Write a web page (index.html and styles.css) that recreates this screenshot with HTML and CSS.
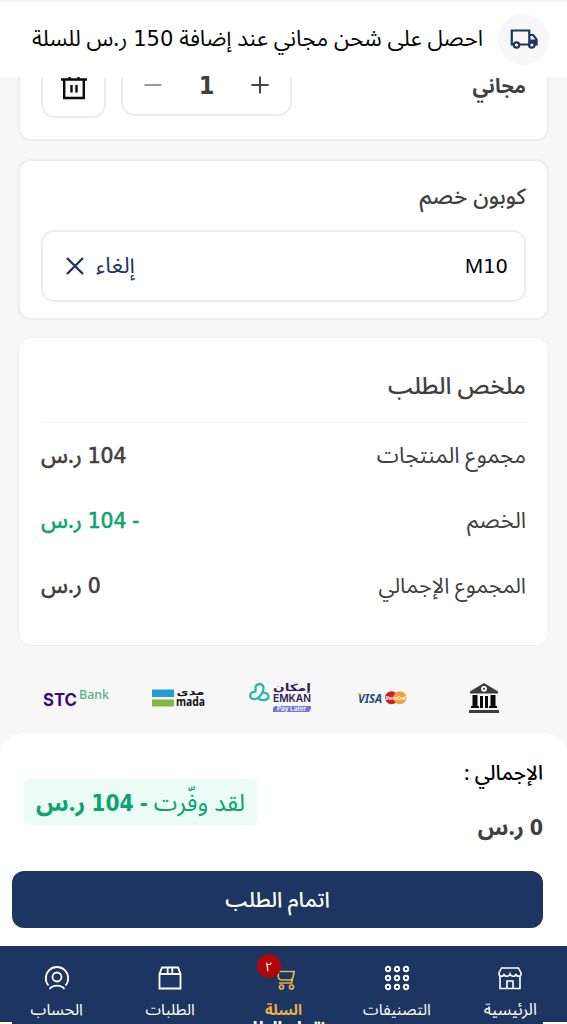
FILE: index.html
```html
<!DOCTYPE html>
<html lang="ar" dir="rtl">
<head>
<meta charset="utf-8">
<title>السلة</title>
<link rel="stylesheet" href="styles.css">
</head>
<body>
<div class="page">
  <header class="shipping">
    <span class="shipping-icon">
      <svg width="30" height="30" viewBox="0 0 30 30" fill="none" stroke="#1c3661" stroke-width="2.200"><path d="M5 19.500H2.800V5.500H20.300V19.500H10M20.300 10H24.200L27.600 14.500V19.500H25.500"/><path d="M21 14.500H27.500V19H25L22.800 17L21 18Z" fill="#1c3661" stroke="none"/><circle cx="7.500" cy="20" r="2.700"/><circle cx="22.800" cy="20" r="2.700"/></svg>
    </span>
    <p class="shipping-text t">احصل على شحن مجاني عند إضافة <span class="d">150</span> ر.س للسلة</p>
  </header>

  <main class="content">
    <section class="card product">
      <strong class="free t">مجاني</strong>
      <div class="quantity">
        <svg width="20" height="20" viewBox="0 0 20 20" stroke="#444" stroke-width="2"><path d="M1.500 10H18.500M10 1.500V18.500"/></svg>
        <span class="count">1</span>
        <svg width="20" height="20" viewBox="0 0 20 20" stroke="#999" stroke-width="2"><path d="M1.500 10H18.500"/></svg>
      </div>
      <div class="trash">
        <svg width="28" height="26" viewBox="0 0 28 26" fill="none" stroke="#0b0b0b" stroke-width="2.400"><path d="M1 5.500H27M4.200 5.500V24H23.800V5.500M9.500 5V1.500H18.500V5M11.500 11V18.500M16.500 11V18.500"/></svg>
      </div>
    </section>

    <section class="card coupon">
      <h2 class="coupon-title t">كوبون خصم</h2>
      <div class="coupon-field">
        <span class="code">M<span class="d">10</span></span>
        <span class="cancel"><span class="cancel-text t">إلغاء</span>
          <svg width="18" height="18" viewBox="0 0 18 18" stroke="#1c3661" stroke-width="2.400"><path d="M1 1L17 17M17 1L1 17"/></svg>
        </span>
      </div>
    </section>

    <section class="card summary">
      <h2 class="summary-title t">ملخص الطلب</h2>
      <div class="row"><span class="t label-a">مجموع المنتجات</span><span class="amount t"><span class="d">104</span> ر.س</span></div>
      <div class="row"><span class="t label-a">الخصم</span><span class="amount green t">- <span class="d">104</span> ر.س</span></div>
      <div class="row"><span class="t label-c">المجموع الإجمالي</span><span class="amount t"><span class="d">0</span> ر.س</span></div>
    </section>

    <div class="payments">
      <div class="pay"><svg width="32" height="32" viewBox="0 0 32 32"><path d="M2 9.500L16 1L30 9.500V11.500H2Z" fill="#3c3c3c"/><circle cx="16" cy="6.800" r="2.900" fill="#fff"/><circle cx="16" cy="6.800" r="1" fill="#333"/><path d="M4.500 13H9.500V24H11V26H3V24H4.500ZM12 14H15V26H12ZM17 14H20V26H17ZM22.500 13H27.500V24H29V26H21V24H22.500Z" fill="#080808"/><path d="M1 28H31V31H1Z" fill="#3c3c3c"/></svg></div>
      <div class="pay"><svg class="ltr" width="50" height="16" viewBox="0 0 50 16"><text x="1" y="12.500" class="visa" textLength="24" lengthAdjust="spacingAndGlyphs">VISA</text><path d="M0 3.500H4L5 6.500Z" fill="#e69a2b"/><circle cx="34.500" cy="7.700" r="6.500" fill="#cb2026"/><circle cx="42.800" cy="7.700" r="6.500" fill="#f79e36"/><text x="28.500" y="9.500" class="master" textLength="20" lengthAdjust="spacingAndGlyphs">MasterCard</text></svg></div>
      <div class="pay"><svg class="ltr" width="63" height="32" viewBox="0 0 63 32"><path d="M6.500 10V6A4 4 0 0 1 14.500 6C14.500 11 12 13 10 15C7 18 1.200 18 1.200 13.500C1.200 10.500 4 9.500 6.500 10M9 16C12 19.500 19.500 18.500 19.500 14.500C19.500 11.500 17 10.500 14.500 11" fill="none" stroke="#25b9a7" stroke-width="2.300"/><text x="24" y="9" class="emkan-ar" textLength="38" lengthAdjust="spacingAndGlyphs">إمكان</text><text x="24" y="19.800" class="emkan" textLength="38" lengthAdjust="spacingAndGlyphs">EMKAN</text><path d="M26 24H62V27L60 30H24V26Z" fill="#7777d8"/><text x="28" y="29" class="later" textLength="29" lengthAdjust="spacingAndGlyphs">Pay Later</text></svg></div>
      <div class="pay"><svg class="ltr" width="52" height="24" viewBox="0 0 52 24"><path d="M0 3.500H22V11H0Z" fill="#259bd6"/><path d="M0 13.500H22V20.500H0Z" fill="#84b740"/><text x="24.500" y="9" class="mada-ar" textLength="28" lengthAdjust="spacingAndGlyphs">مدى</text><text x="24" y="20.300" class="mada" textLength="29" lengthAdjust="spacingAndGlyphs">mada</text></svg></div>
      <div class="pay"><svg class="ltr" width="68" height="24" viewBox="0 0 68 24"><text x="1" y="20" class="stc" textLength="34" lengthAdjust="spacingAndGlyphs">STC</text><text x="37" y="13" class="bank" textLength="30" lengthAdjust="spacingAndGlyphs">Bank</text></svg></div>
    </div>
  </main>

  <section class="checkout">
    <div class="totals">
      <div class="total">
        <span class="total-label t">الإجمالي :</span>
        <strong class="total-value t"><span class="d">0</span> ر.س</strong>
      </div>
      <div class="saved"><span class="saved-text t">لقد وفّرت <b>- <span class="d">104</span> ر.س</b></span></div>
    </div>
    <button class="submit"><span class="t">اتمام الطلب</span></button>
  </section>

  <nav class="nav">
    <a class="tab"><svg width="26" height="26" viewBox="0 0 26 26" fill="none" stroke="#fff" stroke-width="1.600"><path d="M3 11V23.500H23V11M4.500 3H21.500L24 8V9C24 12 19.500 12 19 9C18.500 12 14 12 13 9C12 12 7.500 12 7 9C6.500 12 2 12 2 9V8ZM10 23V16H16V23"/></svg><span class="t home">الرئيسية</span></a>
    <a class="tab"><svg width="26" height="26" viewBox="0 0 26 26" fill="none" stroke="#fff" stroke-width="1.900"><circle cx="4" cy="4" r="2.200"/><circle cx="13" cy="4" r="2.200"/><circle cx="22" cy="4" r="2.200"/><circle cx="4" cy="13" r="2.200"/><circle cx="13" cy="13" r="2.200"/><circle cx="22" cy="13" r="2.200"/><circle cx="4" cy="22" r="2.200"/><circle cx="13" cy="22" r="2.200"/><circle cx="22" cy="22" r="2.200"/></svg><span class="t categories">التصنيفات</span></a>
    <a class="tab active"><svg width="26" height="26" viewBox="0 0 26 26" fill="none" stroke="#eab04a" stroke-width="1.700"><path d="M24 6.500H7.300V11.500C7.300 14 8.500 15 11 15H19C21 15 21.500 14 22 12L23.200 6.500M21.500 14L20.500 18H8"/><circle cx="10.500" cy="22" r="2"/><circle cx="20.500" cy="22" r="2"/></svg><span class="t">السلة</span><span class="badge">٢</span></a>
    <a class="tab"><svg width="26" height="26" viewBox="0 0 26 26" fill="none" stroke="#fff" stroke-width="1.800"><path d="M2.500 9L5 2.500H21L23.500 9V23.500H2.500ZM2.500 9H23.500M10.700 3V9M15.300 3V9"/></svg><span class="t">الطلبات</span></a>
    <a class="tab"><svg width="26" height="26" viewBox="0 0 26 26" fill="none" stroke="#fff" stroke-width="1.800"><path d="M4.500 20.500A11.200 11.200 0 1 1 21.500 20.500M5.500 24C9 19.500 17 19.500 20.500 24"/><circle cx="13" cy="12" r="4.500"/></svg><span class="t account">الحساب</span></a>
    <div class="peek"><b class="t">إتمام الطلب</b></div>
  </nav>
</div>
</body>
</html>
```
FILE: styles.css
```css
* { box-sizing: border-box; }
body { margin: 0; background: #f7f7f7; font-family: "Noto Sans", "Noto Sans Arabic", "DejaVu Sans", sans-serif; color: #404040; }
h2, p { margin: 0; font-weight: 400; }
svg { display: block; flex: none; overflow: visible; }
.t { white-space: nowrap; display: block; }
.d { font-family: "DejaVu Sans", sans-serif; font-size: .95em; line-height: 1; }
b .d, strong .d { font-family: "DejaVu Sans Condensed", "DejaVu Sans", sans-serif; font-stretch: condensed; }
.ltr { direction: ltr; }
.page { width: 567px; height: 1024px; display: flex; flex-direction: column; overflow: hidden; }
.shipping { height: 77px; flex: none; background: #fff; border-top: 2px solid #f5f5f5; display: flex; align-items: center; gap: 15px; padding: 0 18px; }
.shipping-icon { width: 51px; height: 51px; border-radius: 50%; background: #f7f7f7; display: grid; place-items: center; }
.shipping-text { color: #050505; font-size: 22.2px; line-height: 30px; padding-bottom: 4px; }
.content { height: 656px; flex: none; padding: 0 18px; display: flex; flex-direction: column; }
.card { background: #fff; border: 2px solid #ededed; border-radius: 13px; flex: none; }
.product { height: 64px; border-top: 0; border-radius: 0 0 13px 13px; display: flex; align-items: flex-start; padding: 0 21px; }
.free { font-size: 20px; line-height: 18px; margin-left: auto; }
.quantity { width: 171px; height: 39px; border: 2px solid #ededed; border-top: 0; border-radius: 0 0 14px 14px; display: flex; justify-content: space-between; align-items: flex-start; padding: 0 20px; margin-left: 15px; }
.quantity svg { margin-top: -2px; }
.count { font: 700 25px/18px "DejaVu Sans Condensed", "DejaVu Sans", sans-serif; }
.trash { width: 65px; height: 41px; border: 2px solid #ededed; border-top: 0; border-radius: 0 0 14px 14px; display: flex; justify-content: center; overflow: hidden; }
.trash svg { margin-top: -3px; }
.coupon { height: 161px; margin-top: 18px; padding: 19px 21px; }
.coupon-title { font-size: 22.2px; line-height: 32px; font-weight: 500; }
.coupon-field { height: 72px; margin-top: 18px; border: 2px solid #ededed; border-radius: 13px; display: flex; align-items: center; justify-content: space-between; padding: 0 16px 0 23px; }
.code { color: #000; font-size: 20.5px; padding-bottom: 2px; }
.cancel { display: flex; align-items: center; gap: 12px; color: #1c3661; font-size: 22.6px; }
.summary { height: 309px; margin-top: 17px; border-width: 1px; padding: 22px 22px; border-color: #efefef; }
.summary-title { font-size: 23.8px; line-height: 50px; font-weight: 500; height: 63px; border-bottom: 1px solid #f3f3f3; }
.row { height: 65px; display: flex; align-items: center; justify-content: space-between; font-size: 22.3px; line-height: 30px; padding-bottom: 2px; }
.label-c { font-size: 21.7px; }
.amount { font-size: 21.5px; font-weight: 500; -webkit-text-stroke: .3px currentColor; }
.amount .d { -webkit-text-stroke: .6px currentColor; }
.green { color: #0aa56d; }
.payments { margin: 35px 14px 0 7px; display: grid; grid-template-columns: repeat(5, 102px); height: 34px; justify-content: start; }
.pay { display: grid; place-items: center; }
.visa { font: italic 700 13px "Noto Sans", sans-serif; fill: #164a80; }
.master { font: italic 700 5px "Noto Sans", sans-serif; fill: #fff; }
.emkan-ar { font: 700 10px "DejaVu Sans", sans-serif; fill: #302052; }
.emkan { font: 600 11px Inter, sans-serif; fill: #302052; }
.later { font: 600 5.500px Inter, sans-serif; fill: #fff; }
.mada-ar { font: 700 10px "DejaVu Sans", sans-serif; fill: #111; }
.mada { font: 700 12px "Noto Sans", sans-serif; fill: #111; }
.stc { font: 700 17px Inter, sans-serif; fill: #3d087b; }
.bank { font: 500 13px "Noto Sans", sans-serif; fill: #5bb08a; }
.checkout { height: 213px; flex: none; background: #fff; border-radius: 24px 24px 0 0; padding: 23px 24px 18px 12px; display: flex; flex-direction: column; justify-content: space-between; }
.totals { display: flex; justify-content: space-between; padding-left: 12px; }
.total { display: flex; flex-direction: column; gap: 23px; }
.total-label { color: #000; font-size: 20.3px; line-height: 32px; font-weight: 500; }
.total-value { font-size: 22.4px; line-height: 32px; }
.saved { width: 233px; height: 46px; margin-top: 23px; background: #edfbf7; border-radius: 5px; display: grid; place-items: center; color: #0aa56d; font-size: 23.8px; line-height: 30px; }
.submit { width: 531px; height: 57px; flex: none; border: 0; border-radius: 12px; background: #1c3661; color: #fff; font: 500 21.4px "Noto Sans", "Noto Sans Arabic", "DejaVu Sans", sans-serif; display: grid; place-items: center; padding: 2px 0 0; }
.nav { position: relative; height: 78px; flex: none; background: #1c3661; display: grid; grid-template-columns: repeat(5, 1fr); color: #fff; overflow: hidden; }
.tab { position: relative; display: flex; flex-direction: column; align-items: center; padding-top: 19px; font-size: 15.7px; line-height: 24px; gap: 6px; }
.home { font-size: 16.5px; }
.account { font-size: 16px; }
.active { color: #eab04a; font-weight: 700; font-size: 14.8px; }
.badge { position: absolute; top: 8px; left: 30px; width: 24px; height: 24px; border-radius: 50%; background: #b00606; color: #fff; font-size: 13px; font-weight: 400; line-height: 24px; text-align: center; }
.peek { position: absolute; left: 0; right: 0; bottom: 0; height: 5px; overflow: hidden; background: linear-gradient(#fff, #fff) 0 100% / 12px 2px no-repeat, linear-gradient(#fff, #fff) 100% 100% / 24px 2px no-repeat; }
.peek b { font-size: 18px; line-height: 16px; text-align: center; padding-right: 10px; }
```
